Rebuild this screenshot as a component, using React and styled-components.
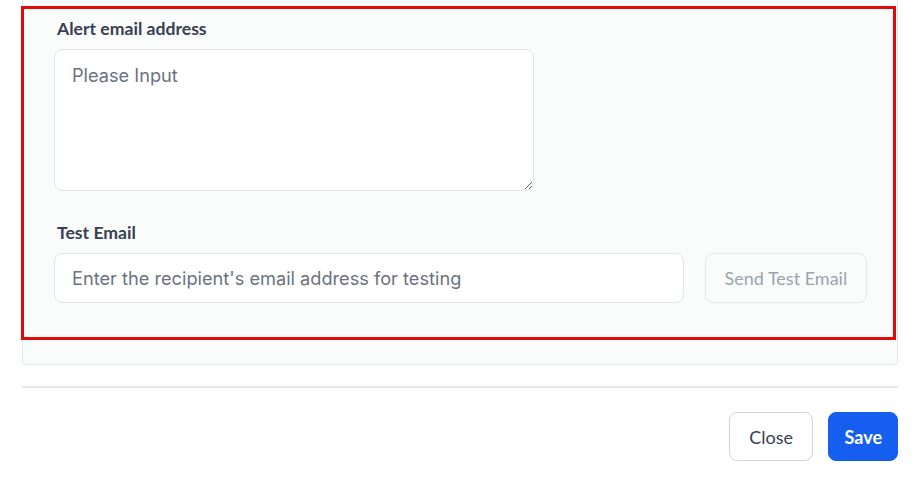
import React from 'react'
import styled, { createGlobalStyle } from 'styled-components'

const GlobalStyle = createGlobalStyle`
  html, body {
    margin: 0;
    padding: 0;
    background: #ffffff;
    font-family: Lato, "Noto Sans", sans-serif;
  }
  * { box-sizing: border-box; }
`

const Page = styled.div`
  width: 924px;
  height: 481px;
  overflow: hidden;
  padding: 0 26px 0 22px;
  display: flex;
  flex-direction: column;
`

const Card = styled.div`
  background: #fafbfb;
  border: 1px solid #e5e7eb;
  border-top: none;
  border-radius: 0 0 4px 4px;
  padding: 6px 1px 24px 0;
  display: flex;
  flex-direction: column;
`

const Highlight = styled.section`
  margin-left: -2px;
  border: 3px solid #e10a0a;
  padding: 8px 26px 34px 30px;
  display: flex;
  flex-direction: column;
`

const Field = styled.div`
  display: flex;
  flex-direction: column;
  gap: 8px;
  margin-bottom: ${p => p.$mb || 0}px;
`

const Label = styled.label`
  padding-left: 3px;
  font-family: Lato, "Noto Sans", sans-serif;
  font-weight: 700;
  font-size: 17.6px;
  line-height: 24px;
  color: #374151;
`

const TextArea = styled.textarea`
  display: block;
  width: 480px;
  height: 142px;
  resize: vertical;
  background: #ffffff;
  border: 1px solid #e2e4e8;
  border-radius: 8px;
  padding: 12px 17px;
  font-family: Inter, "Noto Sans", sans-serif;
  font-size: 18.2px;
  line-height: 26px;
  color: #111827;
  outline: none;
  &::placeholder { color: #6b7280; }
`

const Row = styled.div`
  display: flex;
  align-items: center;
  gap: 21px;
`

const Input = styled.input`
  flex: 0 0 630px;
  height: 50px;
  background: #ffffff;
  border: 1px solid #e2e4e8;
  border-radius: 8px;
  padding: 0 17px;
  font-family: Inter, "Noto Sans", sans-serif;
  font-size: 18.2px;
  color: #111827;
  outline: none;
  &::placeholder { color: #6b7280; }
`

const Button = styled.button`
  flex-shrink: 0;
  white-space: nowrap;
  height: ${p => p.$h || 50}px;
  padding: 0 ${p => p.$px || 19}px;
  border-radius: 8px;
  font-family: Lato, "Noto Sans", sans-serif;
  font-size: 18px;
  font-weight: ${p => (p.$primary ? 700 : 400)};
  cursor: pointer;
  background: ${p => (p.$primary ? '#155eef' : p.$ghost ? '#fafbfb' : '#ffffff')};
  color: ${p => (p.$primary ? '#ffffff' : p.$ghost ? '#9ca3af' : '#374151')};
  border: 1px solid ${p => (p.$primary ? '#155eef' : p.$ghost ? '#e5e7eb' : '#d1d5db')};
  &:disabled { cursor: not-allowed; }
`

const Divider = styled.hr`
  margin: 21px 0 0;
  border: none;
  height: 2px;
  background: #e8e9ec;
`

const Footer = styled.div`
  display: flex;
  justify-content: flex-end;
  gap: 15px;
  margin-top: 24px;
`

export default function App() {
  return (
    <>
      <GlobalStyle />
      <Page>
        <Card>
          <Highlight>
            <Field $mb={30}>
              <Label>Alert email address</Label>
              <TextArea placeholder="Please Input" />
            </Field>
            <Field>
              <Label>Test Email</Label>
              <Row>
                <Input placeholder="Enter the recipient's email address for testing" />
                <Button $ghost $px={18.5} disabled>Send Test Email</Button>
              </Row>
            </Field>
          </Highlight>
        </Card>
        <Divider />
        <Footer>
          <Button $h={49} $px={19.5}>Close</Button>
          <Button $h={49} $primary $px={15}>Save</Button>
        </Footer>
      </Page>
    </>
  )
}
